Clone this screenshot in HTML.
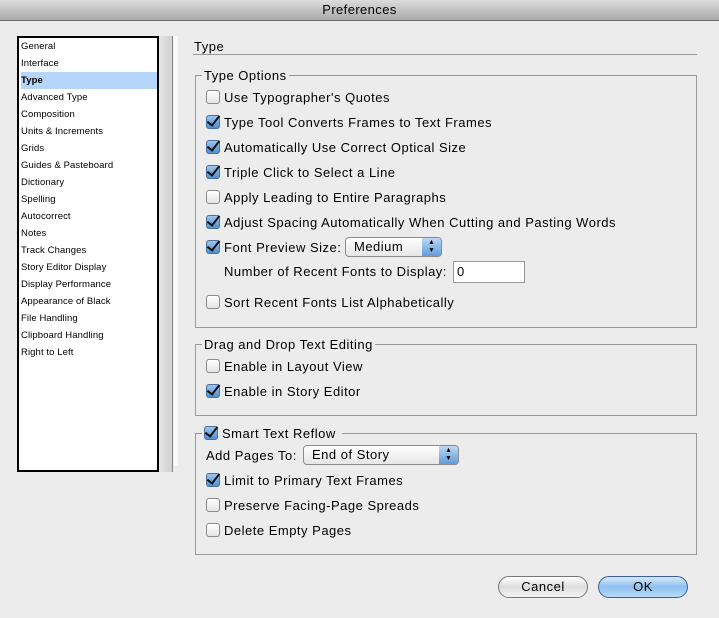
<!DOCTYPE html>
<html><head><style>
*{margin:0;padding:0;box-sizing:border-box}
body{width:719px;height:618px;background:#ececec;font-family:"Liberation Sans",sans-serif;color:#000;position:relative;overflow:hidden;font-size:13px}
.a{position:absolute;white-space:nowrap}
.title{left:0;top:0;width:719px;height:21px;background:linear-gradient(#dcdcdc,#a9a9a9);border-bottom:1px solid #6a6a6a;text-align:center;font-size:13px;line-height:20px;letter-spacing:0.4px}
.list{left:17px;top:36px;width:142px;height:436px;background:#fff;border:2px solid #000}
.sb{left:159px;top:36px;width:14px;height:436px;background:linear-gradient(90deg,#e6e6e6,#d0d0d0);border-right:1px solid #888}
.sb2{left:174px;top:36px;width:4px;height:430px;background:#fafafa}
.li{position:absolute;left:2px;font-size:9.5px;height:17px;line-height:17px;width:136px;letter-spacing:0.1px}
.sel{background:#b5d5fb;font-weight:bold}
.grp{position:absolute;border:1px solid #9a9a9a;left:195px;width:502px}
.gt{position:absolute;background:#ececec;padding:0 2px;font-size:13px;line-height:16px;letter-spacing:0.5px}
.cb{position:absolute;width:14px;height:14px;border:1px solid #8a8a8a;border-radius:3px;background:linear-gradient(#fff,#e4e4e4)}
.cb.on{background:linear-gradient(#9cc6ee,#4f8fd2);border-color:#4a6f99}
.cb.on:after{content:"";position:absolute;left:3px;top:-3px;width:5px;height:11px;border:solid #111;border-width:0 2.5px 2.5px 0;transform:rotate(38deg)}
.t{position:absolute;font-size:13px;line-height:16px;letter-spacing:0.5px;white-space:nowrap}
.pop{position:absolute;height:20px;border:1px solid #8a8a8a;border-radius:4px;background:linear-gradient(#fff,#e6e6e6);font-size:13px;line-height:18px;padding-left:8px;letter-spacing:0.5px}
.arr{position:absolute;right:0;top:0;width:19px;height:18px;background:linear-gradient(#bcd8f5,#5f9ddb);border-radius:0 3px 3px 0;font-size:7px;line-height:8px;text-align:center;padding-top:1px;letter-spacing:0}
.btn{position:absolute;top:576px;height:22px;border:1px solid #777;border-radius:11px;text-align:center;font-size:13px;line-height:20px;width:90px;letter-spacing:0.5px}
</style></head><body>
<div class="a title">Preferences</div>
<div class="a list">
<div class="li" style="top:0">General</div>
<div class="li" style="top:17px">Interface</div>
<div class="li sel" style="top:34px">Type</div>
<div class="li" style="top:51px">Advanced Type</div>
<div class="li" style="top:68px">Composition</div>
<div class="li" style="top:85px">Units &amp; Increments</div>
<div class="li" style="top:102px">Grids</div>
<div class="li" style="top:119px">Guides &amp; Pasteboard</div>
<div class="li" style="top:136px">Dictionary</div>
<div class="li" style="top:153px">Spelling</div>
<div class="li" style="top:170px">Autocorrect</div>
<div class="li" style="top:187px">Notes</div>
<div class="li" style="top:204px">Track Changes</div>
<div class="li" style="top:221px">Story Editor Display</div>
<div class="li" style="top:238px">Display Performance</div>
<div class="li" style="top:255px">Appearance of Black</div>
<div class="li" style="top:272px">File Handling</div>
<div class="li" style="top:289px">Clipboard Handling</div>
<div class="li" style="top:306px">Right to Left</div>
</div>
<div class="a sb"></div><div class="a sb2"></div>

<div class="t" style="left:194px;top:39px">Type</div>
<div class="a" style="left:193px;top:54px;width:504px;height:1px;background:#9a9a9a"></div>

<div class="grp" style="top:75px;height:253px"></div>
<div class="gt" style="left:202px;top:68px">Type Options</div>
<div class="cb" style="left:206px;top:90px"></div><div class="t" style="left:224px;top:90px">Use Typographer's Quotes</div>
<div class="cb on" style="left:206px;top:115px"></div><div class="t" style="left:224px;top:115px">Type Tool Converts Frames to Text Frames</div>
<div class="cb on" style="left:206px;top:140px"></div><div class="t" style="left:224px;top:140px">Automatically Use Correct Optical Size</div>
<div class="cb on" style="left:206px;top:165px"></div><div class="t" style="left:224px;top:165px">Triple Click to Select a Line</div>
<div class="cb" style="left:206px;top:190px"></div><div class="t" style="left:224px;top:190px">Apply Leading to Entire Paragraphs</div>
<div class="cb on" style="left:206px;top:215px"></div><div class="t" style="left:224px;top:215px">Adjust Spacing Automatically When Cutting and Pasting Words</div>
<div class="cb on" style="left:206px;top:240px"></div><div class="t" style="left:224px;top:240px">Font Preview Size:</div>
<div class="pop" style="left:345px;top:237px;width:97px">Medium<div class="arr">▲<br>▼</div></div>
<div class="t" style="left:224px;top:264px">Number of Recent Fonts to Display:</div>
<div class="a" style="left:453px;top:261px;width:72px;height:22px;background:#fff;border:1px solid #999;font-size:13px;line-height:20px;padding-left:3px">0</div>
<div class="cb" style="left:206px;top:295px"></div><div class="t" style="left:224px;top:295px">Sort Recent Fonts List Alphabetically</div>

<div class="grp" style="top:344px;height:72px"></div>
<div class="gt" style="left:202px;top:337px">Drag and Drop Text Editing</div>
<div class="cb" style="left:206px;top:359px"></div><div class="t" style="left:224px;top:359px">Enable in Layout View</div>
<div class="cb on" style="left:206px;top:384px"></div><div class="t" style="left:224px;top:384px">Enable in Story Editor</div>

<div class="grp" style="top:433px;height:122px"></div>
<div class="gt" style="left:202px;top:426px;padding-right:6px"><span class="cb on" style="position:relative;display:inline-block;vertical-align:-2px;margin-right:4px"></span>Smart Text Reflow</div>
<div class="t" style="left:206px;top:448px">Add Pages To:</div>
<div class="pop" style="left:303px;top:445px;width:156px">End of Story<div class="arr">▲<br>▼</div></div>
<div class="cb on" style="left:206px;top:473px"></div><div class="t" style="left:224px;top:473px">Limit to Primary Text Frames</div>
<div class="cb" style="left:206px;top:498px"></div><div class="t" style="left:224px;top:498px">Preserve Facing-Page Spreads</div>
<div class="cb" style="left:206px;top:523px"></div><div class="t" style="left:224px;top:523px">Delete Empty Pages</div>

<div class="btn" style="left:498px;background:linear-gradient(#fff,#ddd 50%,#f4f4f4)">Cancel</div>
<div class="btn" style="left:598px;border-color:#3a5f9a;background:linear-gradient(#d6e9fb,#8ec0ef 50%,#b9dbf9)">OK</div>
</body></html>
